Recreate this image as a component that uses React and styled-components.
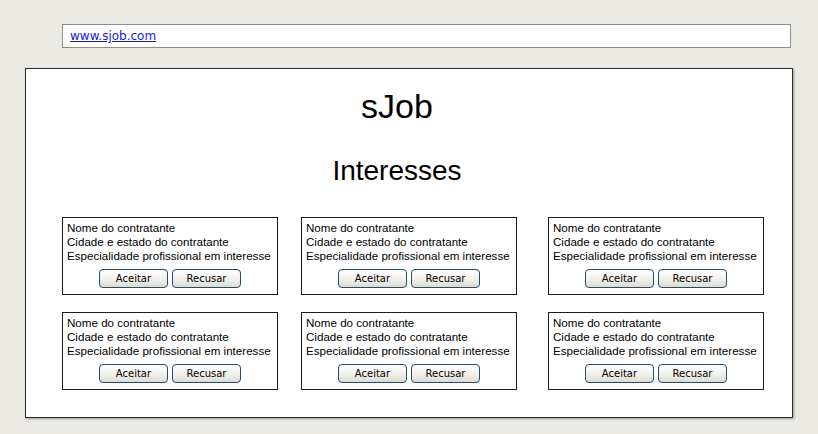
import React from "react";
import styled, { createGlobalStyle } from "styled-components";

const GlobalStyle = createGlobalStyle`
  *, *::before, *::after {
    box-sizing: border-box;
  }
  html, body {
    margin: 0;
    padding: 0;
    background: #ebe9e4;
  }
  body {
    width: 818px;
    height: 434px;
    overflow: hidden;
  }
`;

const interesses = [1, 2, 3, 4, 5, 6];

function App() {
  return (
    <Page>
      <GlobalStyle />
      <UrlBar>
        <UrlLink href="#">www.sjob.com</UrlLink>
      </UrlBar>
      <Panel>
        <Logo>sJob</Logo>
        <Heading>Interesses</Heading>
        <CardGrid>
          {interesses.map((id) => (
            <Cell key={id}>
              <Card>
                <Line>Nome do contratante</Line>
                <Line>Cidade e estado do contratante</Line>
                <Line>Especialidade profissional em interesse</Line>
                <Actions>
                  <Button>Aceitar</Button>
                  <Button>Recusar</Button>
                </Actions>
              </Card>
            </Cell>
          ))}
        </CardGrid>
      </Panel>
    </Page>
  );
}

const Page = styled.div`
  padding: 24px 0 0 25px;
  display: flex;
  flex-direction: column;
`;

const UrlBar = styled.div`
  margin-left: 37px;
  width: 729px;
  height: 24px;
  background: #fff;
  border: 1px solid #8c8c8c;
  display: flex;
  align-items: center;
  padding-left: 7px;
`;

const UrlLink = styled.a`
  font-family: "DejaVu Sans", sans-serif;
  font-size: 12px;
  color: #1a1ad6;
  text-decoration: underline;
`;

const Panel = styled.div`
  margin-top: 20px;
  width: 768px;
  height: 350px;
  background: #fff;
  border: 1px solid #2b2b2b;
  box-shadow: 1px 1px 2px rgba(0, 0, 0, 0.35);
  display: flex;
  flex-direction: column;
  align-items: center;
`;

const Logo = styled.h1`
  margin: 18px 24px 0 0;
  font-family: "Liberation Sans", sans-serif;
  font-weight: 400;
  font-size: 34px;
  line-height: 38px;
  color: #000;
`;

const Heading = styled.h2`
  margin: 30px 24px 0 0;
  font-family: "Liberation Sans", sans-serif;
  font-weight: 400;
  font-size: 28px;
  line-height: 32px;
  color: #000;
`;

const CardGrid = styled.div`
  align-self: stretch;
  margin-top: 30px;
  padding-left: 36px;
  display: grid;
  grid-template-columns: 239px 247px 216px;
  row-gap: 17px;
`;

const Cell = styled.div`
  display: flex;
`;

const Card = styled.div`
  width: 216px;
  height: 78px;
  border: 1px solid #1c1c1c;
  padding: 3px 0 0 4px;
  display: flex;
  flex-direction: column;
`;

const Line = styled.div`
  font-family: "Liberation Sans", sans-serif;
  font-size: 11.6px;
  line-height: 14px;
  color: #000;
  white-space: nowrap;
`;

const Actions = styled.div`
  margin-top: 6px;
  margin-left: -4px;
  display: flex;
  justify-content: center;
  gap: 4px;
`;

const Button = styled.button`
  width: 69px;
  height: 19px;
  padding: 0;
  border: 1px solid #2a4a66;
  border-radius: 4px;
  background: linear-gradient(#ffffff, #f1f0ec 55%, #dcdad2);
  font-family: "DejaVu Sans", sans-serif;
  font-size: 10px;
  color: #000;
`;

export default App;
